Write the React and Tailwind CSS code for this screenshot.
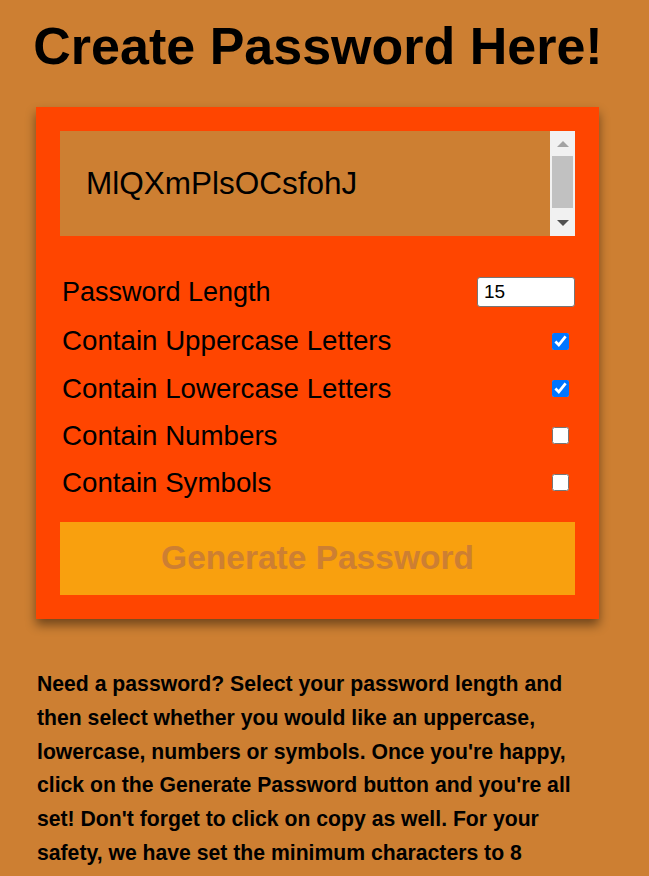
import { useState } from "react";

const font = { fontFamily: '"Liberation Sans", Arial, sans-serif' };

const Option = ({ label, checked, onChange, height }) => (
  <label className={`flex items-center justify-between pl-[2px] ${height}`}>
    <span className="text-[27.7px] text-black">{label}</span>
    <input
      type="checkbox"
      checked={checked}
      onChange={onChange}
      className="w-[17px] h-[17px] mr-[6px] accent-[#0075ff]"
    />
  </label>
);

export default function App() {
  const [length, setLength] = useState(15);
  const [upper, setUpper] = useState(true);
  const [lower, setLower] = useState(true);
  const [numbers, setNumbers] = useState(false);
  const [symbols, setSymbols] = useState(false);

  return (
    <div className="min-h-screen bg-[#cd7f32] pt-[15px] pb-10" style={font}>
      <h1 className="pr-[13px] text-center text-[52px] leading-[62px] font-bold text-black">
        Create Password Here!
      </h1>

      <div className="ml-[36px] mt-[30px] w-[563px] bg-[#ff4500] p-[24px] shadow-[0_6px_10px_rgba(0,0,0,0.45)]">
        {/* Password output */}
        <div className="flex h-[105px] bg-[#cd7f32]">
          <div className="flex flex-1 items-center pl-[26px] text-[31.5px] text-black">
            MlQXmPlsOCsfohJ
          </div>
          <div className="relative w-[25px] bg-[#f1f1f1]">
            <div className="absolute left-1/2 top-[10px] -translate-x-1/2 w-0 h-0 border-l-[6px] border-r-[6px] border-b-[6px] border-l-transparent border-r-transparent border-b-[#a3a3a3]" />
            <div className="absolute left-[2px] right-[2px] top-[25px] h-[52px] bg-[#c1c1c1]" />
            <div className="absolute left-1/2 bottom-[10px] -translate-x-1/2 w-0 h-0 border-l-[6px] border-r-[6px] border-t-[6px] border-l-transparent border-r-transparent border-t-[#505050]" />
          </div>
        </div>

        {/* Options */}
        <div className="mt-[31px] flex flex-col">
          <label className="flex h-[50px] items-center justify-between pl-[2px]">
            <span className="text-[27px] text-black">Password Length</span>
            <input
              type="number"
              value={length}
              onChange={(e) => setLength(e.target.value)}
              className="w-[98px] h-[30px] rounded-[3px] border border-[#767676] bg-white px-[6px] text-[19px] text-black outline-none"
            />
          </label>
          <Option label="Contain Uppercase Letters" checked={upper} onChange={() => setUpper(!upper)} height="h-[48px]" />
          <Option label="Contain Lowercase Letters" checked={lower} onChange={() => setLower(!lower)} height="h-[47px]" />
          <Option label="Contain Numbers" checked={numbers} onChange={() => setNumbers(!numbers)} height="h-[47px]" />
          <Option label="Contain Symbols" checked={symbols} onChange={() => setSymbols(!symbols)} height="h-[47px]" />
        </div>

        <button className="mt-[16px] flex h-[73px] w-full items-center justify-center bg-[#f9a00e] text-[33.5px] font-bold text-[#cd7f32]">
          Generate Password
        </button>
      </div>

      <p className="mt-[48px] px-[37px] text-[21.2px] leading-[33.8px] font-bold text-black whitespace-nowrap">
        Need a password? Select your password length and
        <br />
        then select whether you would like an uppercase,
        <br />
        lowercase, numbers or symbols. Once you're happy,
        <br />
        click on the Generate Password button and you're all
        <br />
        set! Don't forget to click on copy as well. For your
        <br />
        safety, we have set the minimum characters to 8
      </p>
    </div>
  );
}
